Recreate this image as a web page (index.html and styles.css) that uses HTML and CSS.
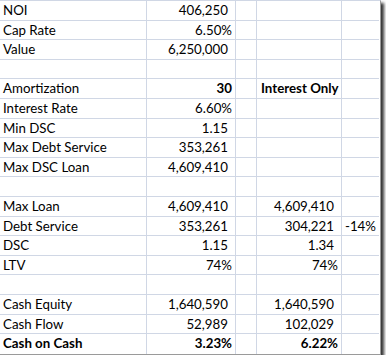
FILE: index.html
```html
<!DOCTYPE html>
<html>
<head>
<meta charset="utf-8">
<link rel="stylesheet" href="styles.css">
</head>
<body>
<div class="sheet">
  <div class="c lbl">NOI</div><div class="c num">406,250</div><div class="c"></div><div class="c"></div><div class="c"></div>
  <div class="c lbl">Cap Rate</div><div class="c pct">6.50%</div><div class="c"></div><div class="c"></div><div class="c"></div>
  <div class="c lbl">Value</div><div class="c num">6,250,000</div><div class="c"></div><div class="c"></div><div class="c"></div>
  <div class="c lbl"></div><div class="c"></div><div class="c"></div><div class="c"></div><div class="c"></div>
  <div class="c lbl">Amortization</div><div class="c pct b">30</div><div class="c"></div><div class="c lbl b io">Interest Only</div><div class="c"></div>
  <div class="c lbl">Interest Rate</div><div class="c pct">6.60%</div><div class="c"></div><div class="c"></div><div class="c"></div>
  <div class="c lbl">Min DSC</div><div class="c num">1.15</div><div class="c"></div><div class="c"></div><div class="c"></div>
  <div class="c lbl">Max Debt Service</div><div class="c num">353,261</div><div class="c"></div><div class="c"></div><div class="c"></div>
  <div class="c lbl">Max DSC Loan</div><div class="c num">4,609,410</div><div class="c"></div><div class="c"></div><div class="c"></div>
  <div class="c lbl"></div><div class="c"></div><div class="c"></div><div class="c"></div><div class="c"></div>
  <div class="c lbl">Max Loan</div><div class="c num">4,609,410</div><div class="c"></div><div class="c num">4,609,410</div><div class="c"></div>
  <div class="c lbl">Debt Service</div><div class="c num">353,261</div><div class="c"></div><div class="c num">304,221</div><div class="c pct">-14%</div>
  <div class="c lbl">DSC</div><div class="c num">1.15</div><div class="c"></div><div class="c num">1.34</div><div class="c"></div>
  <div class="c lbl">LTV</div><div class="c pct">74%</div><div class="c"></div><div class="c pct">74%</div><div class="c"></div>
  <div class="c lbl"></div><div class="c"></div><div class="c"></div><div class="c"></div><div class="c"></div>
  <div class="c lbl">Cash Equity</div><div class="c num">1,640,590</div><div class="c"></div><div class="c num">1,640,590</div><div class="c"></div>
  <div class="c lbl">Cash Flow</div><div class="c num">52,989</div><div class="c"></div><div class="c num">102,029</div><div class="c"></div>
  <div class="c lbl b">Cash on Cash</div><div class="c pct b">3.23%</div><div class="c"></div><div class="c pct b">6.22%</div><div class="c"></div>
</div>
</body>
</html>
```
FILE: styles.css
```css
html, body {
  margin: 0;
  padding: 0;
  background: #ffffff;
}
.sheet {
  display: grid;
  grid-template-columns: 147px 89px 21px 85px 37px;
  grid-template-rows: repeat(18, 19.6px);
  width: 380px;
  border-top: 1px solid #d0d7e5;
  border-right: 1px solid #9a9a9a;
  border-bottom: 1px solid #9a9a9a;
  box-shadow: 3px 3px 3px rgba(0, 0, 0, 0.8);
  font-family: Lato, "Open Sans", sans-serif;
  font-size: 13.3px;
  color: #000;
}
.c {
  box-sizing: border-box;
  border-right: 1px solid #d0d7e5;
  border-bottom: 1px solid #d0d7e5;
  padding-top: 1px;
  line-height: 17px;
  white-space: nowrap;
  overflow: visible;
}
.c:nth-child(5n) {
  border-right: none;
}
.sheet .c:nth-last-child(-n+5) {
  border-bottom: none;
}
.lbl {
  padding-left: 3px;
  text-align: left;
}
.io {
  padding-left: 4px;
}
.num {
  text-align: right;
  padding-right: 7px;
}
.pct {
  text-align: right;
  padding-right: 3px;
}
.b {
  font-weight: bold;
}
```
